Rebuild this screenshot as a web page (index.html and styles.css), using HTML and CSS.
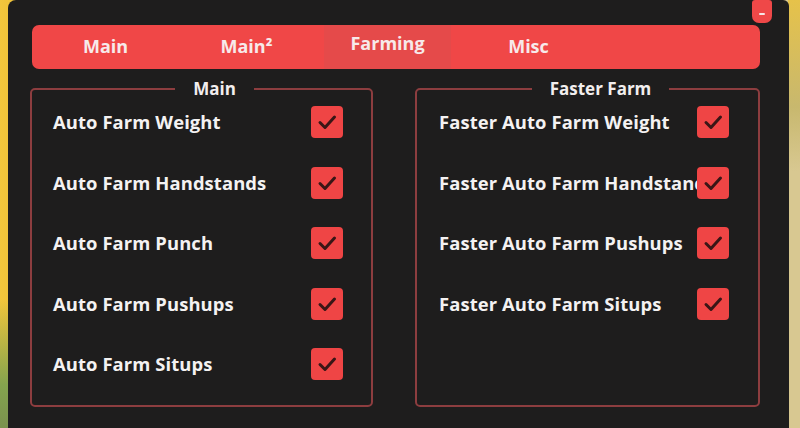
FILE: index.html
```html
<!DOCTYPE html>
<html>
<head>
<meta charset="utf-8">
<link rel="stylesheet" href="styles.css">
</head>
<body>
<div class="scene">
  <div class="panel">
    <button class="close"><span class="dash"></span></button>
    <nav class="tabs">
      <div class="tab">Main</div>
      <div class="tab">Main²</div>
      <div class="tab active">Farming</div>
      <div class="tab">Misc</div>
    </nav>
    <div class="groups">
      <fieldset class="group left">
        <legend>Main</legend>
        <div class="rows">
          <div class="row"><span class="label">Auto Farm Weight</span><span class="check"><svg viewBox="0 0 32 32"><path d="M9 16.5 L14 21.5 L23.5 11"/></svg></span></div>
          <div class="row"><span class="label">Auto Farm Handstands</span><span class="check"><svg viewBox="0 0 32 32"><path d="M9 16.5 L14 21.5 L23.5 11"/></svg></span></div>
          <div class="row"><span class="label">Auto Farm Punch</span><span class="check"><svg viewBox="0 0 32 32"><path d="M9 16.5 L14 21.5 L23.5 11"/></svg></span></div>
          <div class="row"><span class="label">Auto Farm Pushups</span><span class="check"><svg viewBox="0 0 32 32"><path d="M9 16.5 L14 21.5 L23.5 11"/></svg></span></div>
          <div class="row"><span class="label">Auto Farm Situps</span><span class="check"><svg viewBox="0 0 32 32"><path d="M9 16.5 L14 21.5 L23.5 11"/></svg></span></div>
        </div>
      </fieldset>
      <fieldset class="group right">
        <legend>Faster Farm</legend>
        <div class="rows">
          <div class="row"><span class="label">Faster Auto Farm Weight</span><span class="check"><svg viewBox="0 0 32 32"><path d="M9 16.5 L14 21.5 L23.5 11"/></svg></span></div>
          <div class="row"><span class="label">Faster Auto Farm Handstands</span><span class="check"><svg viewBox="0 0 32 32"><path d="M9 16.5 L14 21.5 L23.5 11"/></svg></span></div>
          <div class="row"><span class="label">Faster Auto Farm Pushups</span><span class="check"><svg viewBox="0 0 32 32"><path d="M9 16.5 L14 21.5 L23.5 11"/></svg></span></div>
          <div class="row"><span class="label">Faster Auto Farm Situps</span><span class="check"><svg viewBox="0 0 32 32"><path d="M9 16.5 L14 21.5 L23.5 11"/></svg></span></div>
        </div>
      </fieldset>
    </div>
  </div>
</div>
</body>
</html>
```
FILE: styles.css
```css
* { box-sizing: border-box; }
html, body { margin: 0; padding: 0; }
body {
  width: 800px;
  height: 428px;
  overflow: hidden;
  font-family: "Open Sans", "Noto Sans", sans-serif;
  background: linear-gradient(to right, #f2c63c 0, #f0c33a 8px, #d8c891 788px, #ddcd95 800px);
}
.scene {
  width: 800px;
  height: 428px;
  background:
    linear-gradient(to bottom, rgba(0,0,0,0) 70%, rgba(120,160,80,0.9) 90%, rgba(110,140,80,0.9) 100%) left / 8px 100% no-repeat,
    linear-gradient(to bottom, #e6c24a 0, #c8b86e 25%, #d8c891 40%) right / 12px 100% no-repeat;
  padding-left: 8px;
}
.panel {
  position: relative;
  width: 781px;
  height: 428px;
  background: #1e1d1d;
  border-radius: 8px 6px 0 0;
  padding-top: 25px;
}
.close {
  position: absolute;
  left: 744px;
  top: 0;
  width: 20px;
  height: 23px;
  border: none;
  padding: 0;
  background: #ef4848;
  border-radius: 3px 3px 7px 7px;
  display: flex;
  align-items: flex-end;
  justify-content: center;
  padding-bottom: 8px;
}
.dash {
  width: 6px;
  height: 2px;
  background: #f6e6e6;
  border-radius: 1px;
}
.tabs {
  margin-left: 24px;
  width: 728px;
  height: 44px;
  background: #f04747;
  border-radius: 7px;
  display: flex;
  gap: 14px;
  padding-left: 10px;
}
.tab {
  width: 127px;
  height: 100%;
  display: flex;
  align-items: center;
  justify-content: center;
  color: #f7eaea;
  font-weight: 700;
  font-size: 18px;
  padding-bottom: 3px;
}
.tab.active {
  background: #e54a4a;
  padding-bottom: 8px;
}
.groups {
  margin-top: 10px;
  margin-left: 22px;
  height: 328px;
  display: flex;
  gap: 42px;
}
.group {
  margin: 0;
  height: 328px;
  border: 2px solid #8d3d3f;
  border-radius: 5px;
  padding: 0 0 0 26px;
  min-width: 0;
}
.group.left { width: 343px; }
.group.right { width: 345px; }
legend {
  margin: 0 auto;
  padding: 0 18px;
  color: #f2eeee;
  font-weight: 700;
  font-size: 17px;
  line-height: 20px;
}
.rows {
  margin-left: -26px;
  padding-top: 7px;
  display: flex;
  flex-direction: column;
  gap: 28.5px;
}
.row {
  height: 32px;
  display: flex;
  align-items: center;
  position: relative;
}
.left .row { padding-left: 21px; }
.right .row { padding-left: 22px; }
.label {
  color: #f4f2f2;
  font-weight: 700;
  font-size: 18.4px;
  white-space: nowrap;
  letter-spacing: 0.1px;
  margin-top: -1px;
}
.check {
  position: absolute;
  top: 0;
  width: 32px;
  height: 32px;
  background: #ef4545;
  border-radius: 4px;
}
.left .check { left: 279px; }
.right .check { left: 280px; }
.check svg { width: 32px; height: 32px; display: block; }
.check path {
  fill: none;
  stroke: #3a1616;
  stroke-width: 3;
  stroke-linecap: round;
  stroke-linejoin: round;
}
```
